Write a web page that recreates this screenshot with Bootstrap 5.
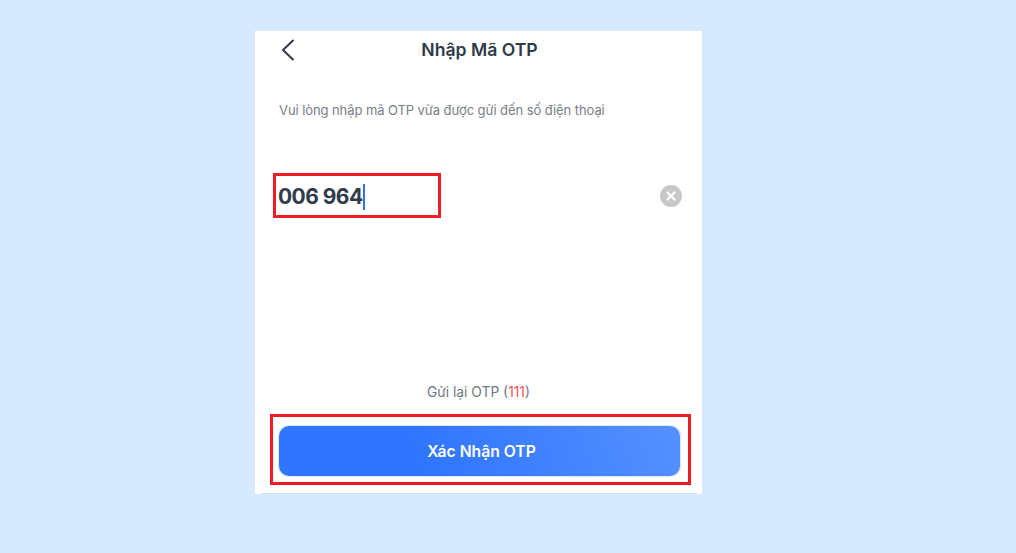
<!DOCTYPE html>
<html lang="vi">
<head>
  <meta charset="UTF-8">
  <title>Nhập Mã OTP</title>
  <meta name="viewport" content="width=device-width, initial-scale=1">
  <link href="https://cdn.jsdelivr.net/npm/bootstrap@5.3.3/dist/css/bootstrap.min.css" rel="stylesheet">
  <style>
    body {
      background-color: #d7e9ff;
      font-family: Inter, "Noto Sans", sans-serif;
      padding: 31px 0 0 255px;
      overflow: hidden;
    }
    .otp-panel {
      width: 447px;
      height: 463px;
      background: #fff;
    }
    .otp-header {
      height: 38px;
      padding: 0 24px;
      position: relative;
    }
    .otp-back {
      position: absolute;
      left: 25px;
      top: 6px;
      line-height: 0;
    }
    .otp-title {
      font-size: 17.6px;
      font-weight: 600;
      color: #2f3b4b;
      margin: 0 0 0 2px;
    }
    .otp-hint {
      font-size: 13px;
      letter-spacing: -0.08px;
      color: #787e88;
      margin: 31px 0 0 24px;
      line-height: 20px;
    }
    .otp-row {
      margin: 53px 20px 0 18px;
    }
    .otp-mark {
      border: 3px solid #ed1c24;
      width: 168px;
      height: 45px;
      padding: 3px 0 0 2px;
    }
    .otp-code {
      font-size: 21px;
      font-weight: 700;
      letter-spacing: -0.55px;
      color: #2f3b4b;
      line-height: 26px;
    }
    .otp-caret {
      width: 2px;
      height: 26px;
      background: #3f6fe8;
    }
    .otp-clear {
      margin-top: 1px;
    }
    .otp-resend {
      font-size: 13.8px;
      color: #6f7682;
      line-height: 20px;
      margin: 0 0 12px 0;
    }
    .otp-resend span {
      color: #f0524f;
    }
    .otp-btn-mark {
      border: 3px solid #ed1c24;
      width: 421px;
      height: 71px;
      margin: 0 0 8px 15px;
      padding: 9px 8px 9px 6px;
    }
    .otp-submit {
      width: 100%;
      height: 50px;
      border: 0;
      border-radius: 10px;
      padding: 2px 0 0 4px;
      background: linear-gradient(70deg, #2f75ff 35%, #5590ff 100%);
      box-shadow: 0 0 0 1px #dbe7ff;
      color: #fff;
      font-size: 15.7px;
      font-weight: 600;
    }
    .otp-rule {
      height: 1px;
      margin: 0 5px 0 7px;
      background: #d5dde8;
    }
  </style>
</head>
<body>
  <div class="otp-panel d-flex flex-column">
    <div class="otp-header d-flex align-items-center justify-content-center">
      <a class="otp-back" href="#">
        <svg width="16" height="26" viewBox="0 0 16 26" fill="none">
          <path d="M13.5 3 L3 13 L13.5 23" stroke="#2f3b4b" stroke-width="2"/>
        </svg>
      </a>
      <h1 class="otp-title">Nhập Mã OTP</h1>
    </div>

    <p class="otp-hint">Vui lòng nhập mã OTP vừa được gửi đến số điện thoại</p>

    <div class="otp-row d-flex align-items-center justify-content-between">
      <div class="otp-mark d-flex align-items-center">
        <span class="otp-code">006 964</span>
        <span class="otp-caret"></span>
      </div>
      <svg class="otp-clear" width="22" height="22" viewBox="0 0 22 22">
        <circle cx="11" cy="11" r="11" fill="#c8c8c8"/>
        <path d="M7.5 7.5 L14.5 14.5 M14.5 7.5 L7.5 14.5" stroke="#fff" stroke-width="2.4" stroke-linecap="round"/>
      </svg>
    </div>

    <div class="mt-auto text-center">
      <p class="otp-resend">Gửi lại OTP (<span>111</span>)</p>
      <div class="otp-btn-mark">
        <button type="button" class="otp-submit">Xác Nhận OTP</button>
      </div>
      <div class="otp-rule"></div>
    </div>
  </div>

  <script src="https://cdn.jsdelivr.net/npm/bootstrap@5.3.3/dist/js/bootstrap.bundle.min.js"></script>
</body>
</html>
